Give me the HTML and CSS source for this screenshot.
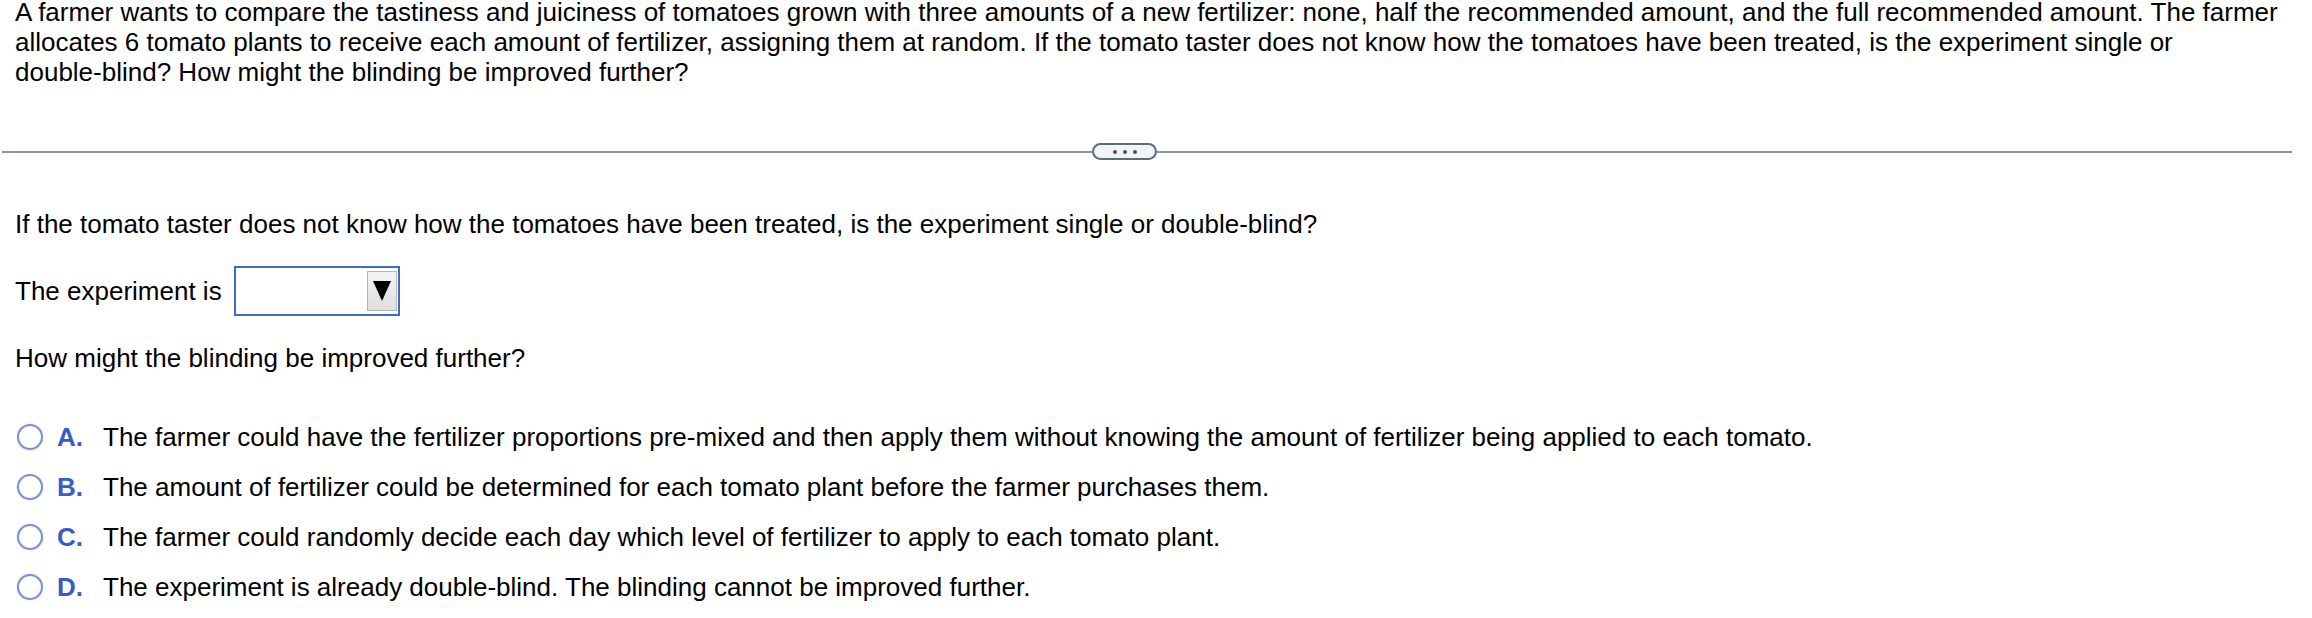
FILE: index.html
```html
<!DOCTYPE html>
<html>
<head>
<meta charset="utf-8">
<link rel="stylesheet" href="styles.css">
</head>
<body>
<div class="page">
  <p class="stem">A farmer wants to compare the tastiness and juiciness of tomatoes grown with three amounts of a new fertilizer: none, half the recommended amount, and the full recommended amount. The farmer allocates 6 tomato plants to receive each amount of fertilizer, assigning them at random. If the tomato taster does not know how the tomatoes have been treated, is the experiment single or <span class="nowrap">double-blind?</span> How might the blinding be improved further?</p>

  <div class="divider">
    <span class="rule rule-left"></span>
    <span class="more"><i></i><i></i><i></i></span>
    <span class="rule rule-right"></span>
  </div>

  <p class="question">If the tomato taster does not know how the tomatoes have been treated, is the experiment single or double-blind?</p>

  <div class="answer">
    <span class="label">The experiment is</span>
    <span class="select">
      <span class="select-btn">
        <svg width="18" height="22" viewBox="0 0 18 22"><polygon points="0,1 18,1 9,21" fill="#000"/></svg>
      </span>
    </span>
  </div>

  <p class="prompt">How might the blinding be improved further?</p>

  <ul class="options">
    <li class="option"><span class="radio"></span><span class="letter">A.</span><span class="text">The farmer could have the fertilizer proportions pre-mixed and then apply them without knowing the amount of fertilizer being applied to each tomato.</span></li>
    <li class="option"><span class="radio"></span><span class="letter">B.</span><span class="text">The amount of fertilizer could be determined for each tomato plant before the farmer purchases them.</span></li>
    <li class="option"><span class="radio"></span><span class="letter">C.</span><span class="text">The farmer could randomly decide each day which level of fertilizer to apply to each tomato plant.</span></li>
    <li class="option"><span class="radio"></span><span class="letter">D.</span><span class="text">The experiment is already double-blind. The blinding cannot be improved further.</span></li>
  </ul>
</div>
</body>
</html>
```
FILE: styles.css
```css
html, body {
  margin: 0;
  padding: 0;
  background: #ffffff;
}
body {
  font-family: "Liberation Sans", Arial, sans-serif;
  font-size: 26px;
  line-height: 30px;
  color: #000;
}
.page {
  padding: 0 20px 0 0;
}
p {
  margin: 0;
  padding-left: 15px;
}
.nowrap {
  white-space: nowrap;
}
.stem {
  margin-top: -3px;
}
.divider {
  display: flex;
  align-items: center;
  margin-top: 56px;
  margin-left: 2px;
  height: 17px;
}
.rule {
  height: 2px;
  background: #8a93a2;
}
.rule-left {
  width: 1090px;
}
.rule-right {
  flex: 1;
}
.more {
  box-sizing: border-box;
  width: 65px;
  height: 17px;
  border: 2px solid #5e6979;
  border-radius: 9px;
  background: #f1f3f6;
  display: flex;
  align-items: center;
  justify-content: center;
  gap: 6px;
}
.more i {
  width: 4px;
  height: 4px;
  border-radius: 50%;
  background: #4b5361;
}
.question {
  margin-top: 49px;
}
.answer {
  display: flex;
  align-items: center;
  margin-top: 27px;
  padding-left: 15px;
  height: 50px;
}
.label {
  margin-right: 12px;
}
.select {
  box-sizing: border-box;
  width: 166px;
  height: 50px;
  border: 2px solid #3a6cc8;
  display: flex;
  justify-content: flex-end;
  align-items: flex-start;
  padding: 3px 1px 0 0;
}
.select-btn {
  box-sizing: border-box;
  width: 30px;
  height: 40px;
  border: 1px solid #b4b4b4;
  background: linear-gradient(#f4f4f4, #dedede);
  display: flex;
  align-items: center;
  justify-content: center;
}
.prompt {
  margin-top: 27px;
}
.options {
  list-style: none;
  margin: 39px 0 0 0;
  padding: 0;
}
.option {
  display: flex;
  align-items: center;
  height: 50px;
}
.radio {
  box-sizing: border-box;
  width: 26px;
  height: 26px;
  margin-left: 17px;
  border: 2.5px solid #7b90d6;
  border-radius: 50%;
  box-shadow: 0 0 1.5px #b3c0ec, inset 0 0 1px #b3c0ec;
  flex: none;
}
.letter {
  width: 46px;
  margin-left: 14px;
  font-weight: bold;
  color: #3a5bc7;
  flex: none;
}
.text {
  white-space: nowrap;
}
```
